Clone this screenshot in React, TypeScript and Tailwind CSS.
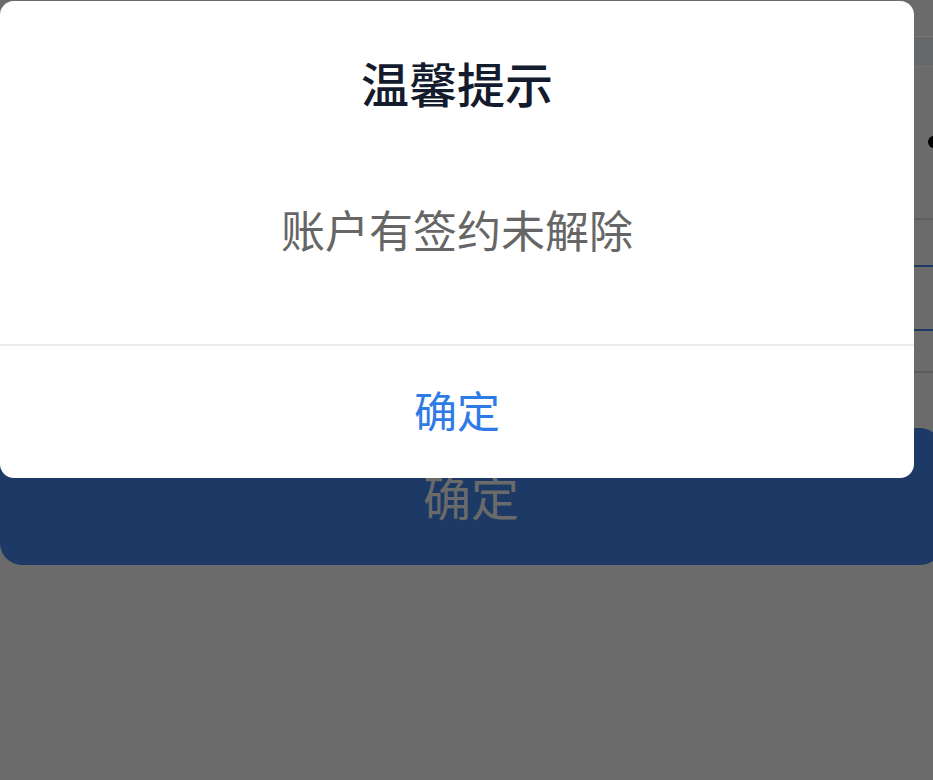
export default function App() {
  return (
    <div
      className="relative h-[780px] w-[933px] overflow-hidden bg-[#6b6b6b]"
      style={{ fontFamily: '"Noto Sans CJK SC", "Noto Sans", sans-serif' }}
    >
      {/* page behind the mask */}
      <div className="flex w-[942px] flex-col">
        <div className="h-[37px] border-b border-[#777777]" />
        <div className="h-[30px] border-b border-[#737373] bg-[#66686b]" />
        <div className="relative h-[153px] border-b-2 border-[#5f5f5f]">
          <span className="absolute left-[928px] top-[69px] h-[12px] w-[12px] rounded-full bg-black" />
        </div>
        <div className="h-[47px] border-b-2 border-[#1d3a66]" />
        <div className="h-[64px] border-b-2 border-[#1d3a66]" />
        <div className="h-[42px] border-b-2 border-[#5c5c5c]" />
        <div className="h-[55px]" />
        <div className="flex h-[137px] items-center justify-center rounded-[22px] bg-[#1d3a66] pb-[4px] text-[48px] text-[#6a6a6a]">
          确定
        </div>
      </div>

      {/* dialog */}
      <div className="absolute left-0 top-[1px] flex h-[477px] w-[914px] flex-col overflow-hidden rounded-[14px] bg-white">
        <div className="flex h-[343px] flex-col items-center pt-[53px]">
          <h2 className="text-[48px] font-medium leading-[56px] text-[#141b2d]">温馨提示</h2>
          <p className="mt-[91px] text-[44px] leading-[56px] text-[#666666]">账户有签约未解除</p>
        </div>
        <div className="h-[2px] bg-[#ececec]" />
        <button className="flex flex-1 items-center justify-center pb-[6px] text-[43px] text-[#2f7be5]">确定</button>
      </div>
    </div>
  );
}
